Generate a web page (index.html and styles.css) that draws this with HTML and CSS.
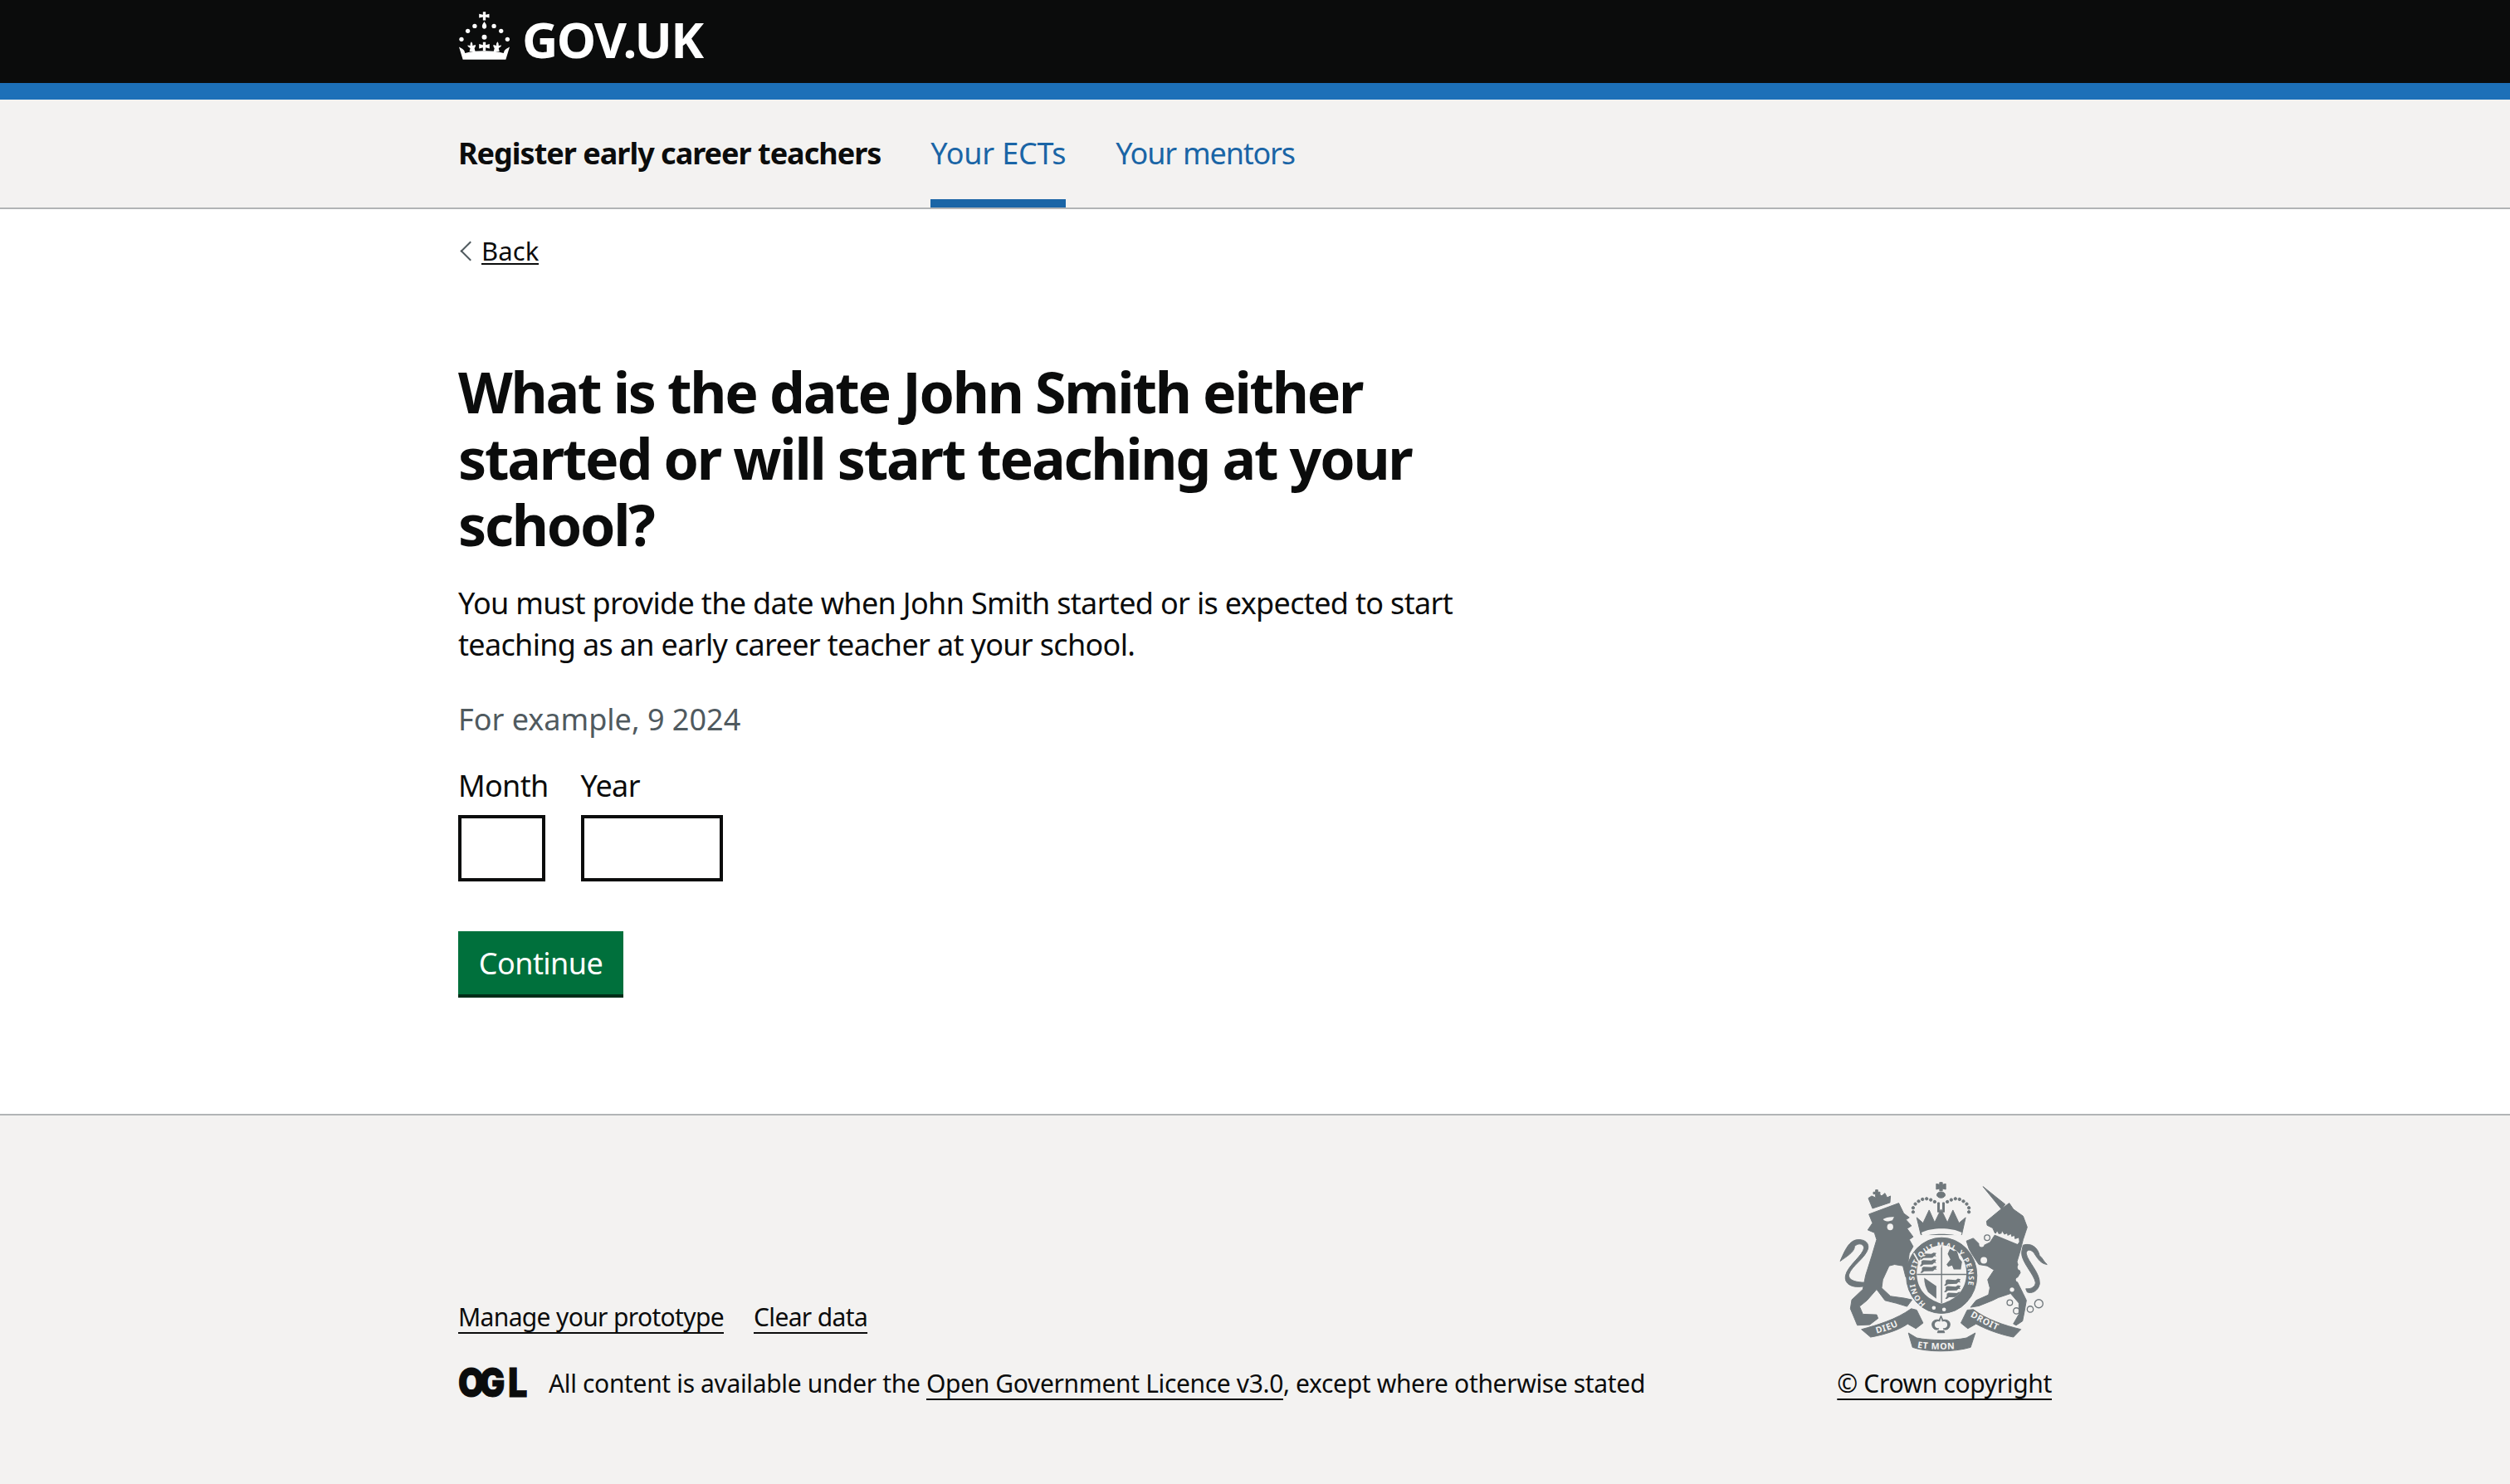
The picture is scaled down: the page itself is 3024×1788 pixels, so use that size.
FILE: index.html
```html
<!DOCTYPE html>
<html lang="en">
<head>
<meta charset="utf-8">
<title>Register early career teachers</title>
<link rel="stylesheet" href="styles.css">
</head>
<body>
<header class="top">
  <div class="wrap top-inner">
    <a class="logo" href="#">
      <svg class="crown" viewBox="22 15 190 180" aria-hidden="true">
        <path fill="#fff" d="M112 18h10v11l13-3v14l-13-3v12h-10V37l-14 3V26l14 3z"/>
        <path fill="#fff" d="M117 54c5 7 8 12 8 17 0 6-4 9-8 9s-8-3-8-9c0-5 3-10 8-17z"/>
        <g fill="#fff">
          <circle cx="82" cy="70" r="8"/><circle cx="152" cy="70" r="8"/>
          <circle cx="57" cy="88" r="8"/><circle cx="178" cy="88" r="8"/>
          <circle cx="34" cy="118" r="8"/><circle cx="201" cy="118" r="8"/>
          <circle cx="117" cy="110" r="9"/>
        </g>
        <path fill="#fff" d="M112 128h10v11l14-4v17l-14-4v12h-10v-12l-14 4v-17l14 4z"/>
        <path fill="#fff" d="M70 127c4 5 5 9 4 14l11-3c1 5-1 9-4 12l3 12H70l-7 0 3-12c-5-2-9-5-10-10l10 1c0-5 0-9 4-14z"/>
        <path fill="#fff" d="M165 127c-4 5-5 9-4 14l-11-3c-1 5 1 9 4 12l-3 12h14l7 0-3-12c5-2 9-5 10-10l-10 1c0-5 0-9-4-14z"/>
        <path fill="#fff" d="M25 146l13 7 6 6 3 9c20-6 48-8 70-8s50 2 70 8l3-9 6-6 13-7-14 46H39z"/>
      </svg>
      <span class="wordmark">GOV.UK</span>
    </a>
  </div>
</header>

<nav class="service">
  <div class="wrap service-inner">
    <span class="service-name">Register early career teachers</span>
    <a class="tab tab-active" href="#">Your ECTs</a>
    <a class="tab" href="#">Your mentors</a>
  </div>
</nav>

<main class="wrap main">
  <a class="back" href="#">Back</a>
  <h1 class="title">What is the date John Smith either started or will start teaching at your school?</h1>
  <p class="lede">You must provide the date when John Smith started or is expected to start teaching as an early career teacher at your school.</p>
  <div class="hint">For example, 9 2024</div>
  <div class="date">
    <div class="date-item">
      <label class="date-label" for="m">Month</label>
      <input class="input input-month" id="m" type="text">
    </div>
    <div class="date-item">
      <label class="date-label" for="y">Year</label>
      <input class="input input-year" id="y" type="text">
    </div>
  </div>
  <button class="button" type="button">Continue</button>
</main>

<footer class="footer">
  <div class="wrap footer-inner">
    <div class="meta">
      <div class="meta-links">
        <a class="flink" href="#">Manage your prototype</a>
        <a class="flink" href="#">Clear data</a>
      </div>
      <div class="licence">
        <svg class="ogl" viewBox="0 0 82 40" role="img" aria-label="Open Government Licence">
          <text class="ogl-text" transform="scale(.85 1)" x="0 30 71" y="36">OGL</text>
        </svg>
        <span>All content is available under the <a class="flink" href="#">Open Government Licence v3.0</a>, except where otherwise stated</span>
      </div>
    </div>
    <div class="copy">
      <svg class="crest" viewBox="100 35 770 625" aria-hidden="true">
        <defs>
          <path id="garter" d="M418 482A98 112 0 1 1 532 482"/>
          <path id="ribL" d="M232 592C280 580 320 565 352 542"/>
          <path id="ribM" d="M383 640C430 650 520 650 565 640"/>
          <path id="ribR" d="M578 528C615 550 665 575 715 596"/>
          <path id="pass" d="M0 0l6-4 30 2 8-5 10 2-4 7 4 5-8-1-6 6-32 1-8 6-6-1 6-8z"/>
          <clipPath id="shield-clip">
            <path d="M385 370C385 320 420 272 475 270C530 272 565 320 565 370C565 430 530 465 475 482C420 465 385 430 385 370Z"/>
          </clipPath>
        </defs>
        <g class="ink soft">
          <!-- lion -->
          <path d="M212 158L320 118L338 155L358 170L346 178L366 200L350 210L372 240L358 250L372 275L358 300L352 345L380 380L372 398L345 385L335 345L305 340L285 345L262 395L258 425L290 455L340 462L368 468L350 492L310 480L270 470L240 430L205 470L178 492L190 520L240 522L245 535L215 558L170 560L145 500L150 468L190 430L200 380L222 310L240 250L232 225L208 215L225 190Z"/>
          <path d="M108 328C125 290 140 250 175 250C200 250 214 265 208 285C197 318 150 345 140 375C135 395 160 405 198 405L198 418C150 428 120 410 128 378C135 345 192 305 194 280C192 262 170 262 160 275C160 295 130 312 108 328Z"/>
          <path d="M225 137L288 116L290 92L278 98L270 82L258 92L246 82L236 98L222 92L210 100Z"/>
          <path d="M236 70h8v8h8v7h-8v10h-8V85h-8v-7h8z"/>
          <!-- crown -->
          <path d="M468 43h10v8l12-3v20l-12-3v8h-10v-8l-12 3V48l12 3z"/>
          <ellipse cx="473" cy="88" rx="15" ry="11"/>
          <circle cx="372" cy="150" r="5"/><circle cx="372" cy="135" r="5"/><circle cx="380" cy="121" r="5"/><circle cx="392" cy="111" r="5"/><circle cx="406" cy="104" r="5"/><circle cx="421" cy="102" r="5"/><circle cx="436" cy="106" r="5"/><circle cx="450" cy="113" r="5"/>
          <circle cx="574" cy="150" r="5"/><circle cx="574" cy="135" r="5"/><circle cx="566" cy="121" r="5"/><circle cx="554" cy="111" r="5"/><circle cx="540" cy="104" r="5"/><circle cx="525" cy="102" r="5"/><circle cx="510" cy="106" r="5"/><circle cx="496" cy="113" r="5"/>
          <path d="M461 116h6v34h-6zM479 116h6v34h-6z"/>
          <path d="M385 170L408 190L430 143L450 188L473 140L496 188L516 143L538 190L562 170L548 232H400Z"/>
          <ellipse cx="475" cy="380" rx="128" ry="137"/>
          <!-- unicorn -->
          <path d="M625 58L705 122L692 140Z"/>
          <path d="M638 183L690 140L720 118L735 140L770 165L785 205L770 250L760 290L748 330L760 370L745 395L770 445L782 470L775 510L768 545L745 560L735 555L755 520L755 480L725 445L680 460L660 470L610 490L580 495L600 470L645 450L650 425L642 395L665 360L640 345L610 340L590 310L575 285L565 255L590 245L620 275L650 260L670 230L660 208L640 198Z"/>
          <path d="M770 270C800 260 825 280 830 310C835 308 845 330 857 340C835 337 825 322 812 302C800 282 780 285 782 302C787 330 832 370 830 410C825 437 800 447 785 440L780 428C800 430 815 420 815 405C810 375 762 330 765 295Z"/>
          <!-- ribbons -->
          <path d="M185 575C240 560 310 540 365 500L385 505L408 552L382 572L352 555C330 572 280 592 218 603Z"/>
          <path d="M762 575C700 560 640 540 590 503L568 505L545 552L570 572L600 555C630 572 680 592 735 603Z"/>
          <path d="M355 588L385 606C430 616 520 616 565 606L597 588L580 640C520 658 420 658 370 640Z"/>
          <path d="M473 525l7 16c18-4 30 8 24 24-4 11-16 14-24 8l6 14h-26l6-14c-8 6-20 3-24-8-6-16 6-28 24-24z"/>
        </g>
        <g class="ring">
          <circle cx="722" cy="478" r="10"/><circle cx="746" cy="508" r="11"/><circle cx="796" cy="502" r="11"/><circle cx="827" cy="482" r="15"/>
          <circle cx="640" cy="243" r="10"/>
        </g>
        <g class="paper">
          <path d="M402 224C440 205 510 205 548 224L544 240C510 226 440 226 406 240Z"/>
          <path d="M263 176c8-5 22-9 40-8l-6 12-14 4c-8 0-16-2-20-8z"/>
          <ellipse cx="289" cy="204" rx="11" ry="12"/>
          <path d="M372 300l5-2 40 70-5 2z"/>
          <path d="M385 370C385 320 420 272 475 270C530 272 565 320 565 370C565 430 530 465 475 482C420 465 385 430 385 370Z"/>
          <circle cx="447" cy="497" r="7"/><circle cx="484" cy="503" r="7"/>
          <circle cx="752" cy="395" r="8"/><circle cx="730" cy="431" r="8"/><circle cx="761" cy="350" r="11"/>
          <circle cx="620" cy="268" r="9"/><circle cx="628" cy="325" r="12"/>
          <path d="M662 226l10 2 4-8 6 10 10-2 2-8 8 12 10-4 2 8 12-6 2 10 10-4 2 12 14-4 2 14-6 8-84-34z"/>
          <path d="M473 533l4 14c12-4 22 4 18 16-2 6-8 9-15 7l3 9h-20l3-9c-7 2-13-1-15-7-4-12 6-20 18-16z"/>
        </g>
        <g class="ink quarters">
          <use href="#pass" x="402" y="304"/><use href="#pass" x="402" y="328"/><use href="#pass" x="404" y="352"/>
          <use href="#pass" x="490" y="398"/><use href="#pass" x="490" y="422"/><use href="#pass" x="494" y="446"/>
          <path d="M505 284l26 8 8 26 10 12-4 28h-26l-6-14-14 4-6-8 14-18-10-20z"/>
          <path d="M473 262h4v220h-4zM383 374h184v4H383z"/>
          <path d="M412 388l44 30v46l-30-24c-8-14-14-32-14-52z"/>
        </g>
        <g class="crest-text">
          <text class="motto"><textPath href="#garter">HONI SOIT QUI MAL Y PENSE</textPath></text>
          <text class="ribbon"><textPath href="#ribL" startOffset="6%">DIEU</textPath></text>
          <text class="ribbon"><textPath href="#ribM" startOffset="2%">ET MON</textPath></text>
          <text class="ribbon"><textPath href="#ribR">DROIT</textPath></text>
        </g>
      </svg>
      <a class="flink" href="#">© Crown copyright</a>
    </div>
  </div>
</footer>
</body>
</html>
```
FILE: styles.css
```css
* { box-sizing: border-box; }
html, body { margin: 0; padding: 0; }
body {
  min-height: 100vh;
  display: flex;
  flex-direction: column;
  background: #fff;
  color: #0b0c0c;
  font-family: "Noto Sans", "Liberation Sans", sans-serif;
  font-size: 36px;
  line-height: 50px;
  letter-spacing: -0.67px;
}
a { color: inherit; }
.wrap { width: 1920px; margin: 0 auto; }

.top { background: #0b0c0c; border-bottom: 20px solid #1d70b8; height: 120px; flex: none; }
.top-inner { height: 100px; display: flex; align-items: center; }
.logo { display: flex; align-items: center; gap: 14px; color: #fff; text-decoration: none; margin-top: -14px; }
.crown { width: 63px; height: 60px; display: block; }
.wordmark { font-size: 60px; line-height: 60px; font-weight: 700; letter-spacing: -1.6px; margin-top: 8px; }

.service { background: #f3f2f1; border-bottom: 2px solid #b1b4b6; height: 132px; flex: none; }
.service-inner { height: 130px; display: flex; align-items: center; gap: 60px; }
.service-name { font-weight: 700; letter-spacing: -1px; }
.tab { position: relative; align-self: stretch; display: flex; align-items: center; color: #1a65a6; text-decoration: none; letter-spacing: -1.2px; }
.tab-active { letter-spacing: -0.2px; }
.tab-active::after { content: ""; position: absolute; left: 0; right: 0; bottom: 0; height: 10px; background: #1a65a6; }

.main { padding: 30px 0 144px; flex: none; }
.back {
  display: block;
  width: max-content;
  position: relative;
  padding-left: 28px;
  font-size: 31px;
  line-height: 40px;
  letter-spacing: 0.1px;
  text-decoration: none;
  background: linear-gradient(#0b0c0c, #0b0c0c) 28px 35px / calc(100% - 28px) 2px no-repeat;
}
.back::before {
  content: "";
  position: absolute;
  left: 6px;
  top: 12px;
  width: 15px;
  height: 15px;
  border-left: 2px solid #505a5f;
  border-bottom: 2px solid #505a5f;
  transform: rotate(45deg);
}

.title { margin: 110px 0 30px; width: 1280px; font-size: 68px; line-height: 80px; font-weight: 700; letter-spacing: -2.25px; }
.lede { margin: 0 0 40px; width: 1280px; }
.hint { margin: 0 0 30px; color: #505a5f; letter-spacing: 0; }
.date { display: flex; gap: 39px; }
.date-item { display: flex; flex-direction: column; gap: 10px; }
.date-label { display: block; white-space: nowrap; }
.input { display: block; height: 80px; border: 4px solid #0b0c0c; background: #fff; border-radius: 0; padding: 0 10px; }
.input-month { width: 105px; }
.input-year { width: 171px; }
.button {
  display: block;
  margin: 60px 0 0;
  width: 199px;
  height: 76px;
  padding: 2px 0 0;
  border: 0;
  border-radius: 0;
  background: #00703c;
  box-shadow: 0 4px 0 #002d18;
  color: #fff;
  font: inherit;
  letter-spacing: -0.55px;
}

.footer { flex: 1; background: #f3f2f1; border-top: 2px solid #b1b4b6; padding: 78px 0 98px; font-size: 30px; line-height: 40px; letter-spacing: -0.35px; }
.footer-inner { display: flex; justify-content: space-between; align-items: flex-end; }
.meta { display: flex; flex-direction: column; gap: 40px; }
.meta-links { display: flex; gap: 36px; letter-spacing: -0.65px; }
.flink { color: #0b0c0c; text-decoration: underline; text-decoration-thickness: 2px; text-underline-offset: 7px; text-decoration-skip-ink: none; }
.licence { display: flex; align-items: center; gap: 27px; }
.ogl { width: 82px; height: 40px; display: block; flex: none; overflow: visible; }
.ogl-text { font-family: Inter, "Liberation Sans", sans-serif; font-weight: 900; font-size: 48px; letter-spacing: 0; fill: #0b0c0c; stroke: #0b0c0c; stroke-width: 1px; }
.copy { display: flex; flex-direction: column; align-items: center; gap: 17px; }
.crest { width: 257px; height: 208px; display: block; }
.ink { fill: #6f777b; }
.soft { stroke: #6f777b; stroke-width: 3; stroke-linejoin: round; }
.ring { fill: none; stroke: #6f777b; stroke-width: 4; }
.paper { fill: #f3f2f1; }
.quarters { clip-path: url(#shield-clip); }
.crest-text { fill: #f3f2f1; font-family: "Noto Sans", sans-serif; font-weight: 700; }
.motto { font-size: 27px; letter-spacing: 3px; }
.ribbon { font-size: 32px; letter-spacing: 2px; }
```
